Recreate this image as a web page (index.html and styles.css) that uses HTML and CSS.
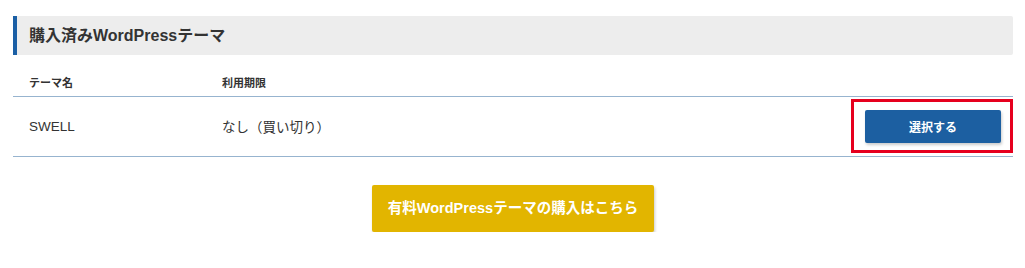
FILE: index.html
```html
<!DOCTYPE html>
<html lang="ja">
<head>
    <meta charset="UTF-8">
    <title>購入済みWordPressテーマ</title>
    <link rel="stylesheet" href="styles.css">
</head>
<body>
    <div class="container">
        <h2 class="section-title">購入済みWordPressテーマ</h2>

        <table class="theme-list">
            <thead>
                <tr>
                    <th class="col-name">テーマ名</th>
                    <th>利用期限</th>
                    <th></th>
                </tr>
            </thead>
            <tbody>
                <tr>
                    <td>SWELL</td>
                    <td>なし（買い切り）</td>
                    <td class="action">
                        <span class="highlight">
                            <button class="btn-select">選択する</button>
                        </span>
                    </td>
                </tr>
            </tbody>
        </table>

        <div class="buy-area">
            <a class="btn-buy" href="#">有料WordPressテーマの購入はこちら</a>
        </div>
    </div>
</body>
</html>
```

FILE: styles.css
```css
body {
    margin: 0;
    padding: 0;
    background: #fff;
    color: #333;
    font-family: "Liberation Sans", "Noto Sans CJK JP", sans-serif;
}

.container {
    width: 1000px;
    margin-left: 13px;
    padding-top: 16px;
}

.section-title {
    margin: 0;
    height: 39px;
    line-height: 39px;
    padding-left: 12px;
    background: #ededed;
    border-left: 4px solid #1b5fa5;
    border-radius: 0 2px 2px 0;
    font-size: 16px;
    font-weight: bold;
    color: #333;
}

.theme-list {
    width: 100%;
    border-collapse: collapse;
}

.theme-list th {
    box-sizing: border-box;
    height: 41px;
    padding: 14px 0 0 16px;
    text-align: left;
    vertical-align: middle;
    font-size: 11px;
    font-weight: bold;
    color: #333;
    border-bottom: 1px solid #97b4cf;
}

.theme-list .col-name {
    width: 193px;
}

.theme-list td {
    height: 59px;
    padding: 0 0 0 16px;
    font-size: 13.5px;
    color: #333;
    border-bottom: 1px solid #97b4cf;
}

.theme-list td.action {
    text-align: right;
    padding-right: 12px;
}

.highlight {
    position: relative;
    display: inline-block;
    vertical-align: middle;
}

.highlight::after {
    content: "";
    position: absolute;
    left: -14px;
    right: -12px;
    top: -11px;
    bottom: -10px;
    border: 3px solid #e6001e;
}

.btn-select {
    display: block;
    width: 136px;
    height: 33px;
    border: none;
    border-radius: 2px;
    background: #1c5fa1;
    color: #fff;
    font-family: inherit;
    font-size: 12px;
    font-weight: bold;
    box-shadow: 1px 2px 3px rgba(0, 0, 0, 0.2);
}

.buy-area {
    text-align: center;
    padding-top: 28px;
}

.btn-buy {
    display: inline-block;
    width: 282px;
    height: 47px;
    line-height: 47px;
    background: #e2b500;
    border-radius: 2px;
    color: #fff;
    font-size: 14.5px;
    font-weight: bold;
    text-decoration: none;
    box-shadow: 1px 2px 3px rgba(0, 0, 0, 0.2);
}
```
